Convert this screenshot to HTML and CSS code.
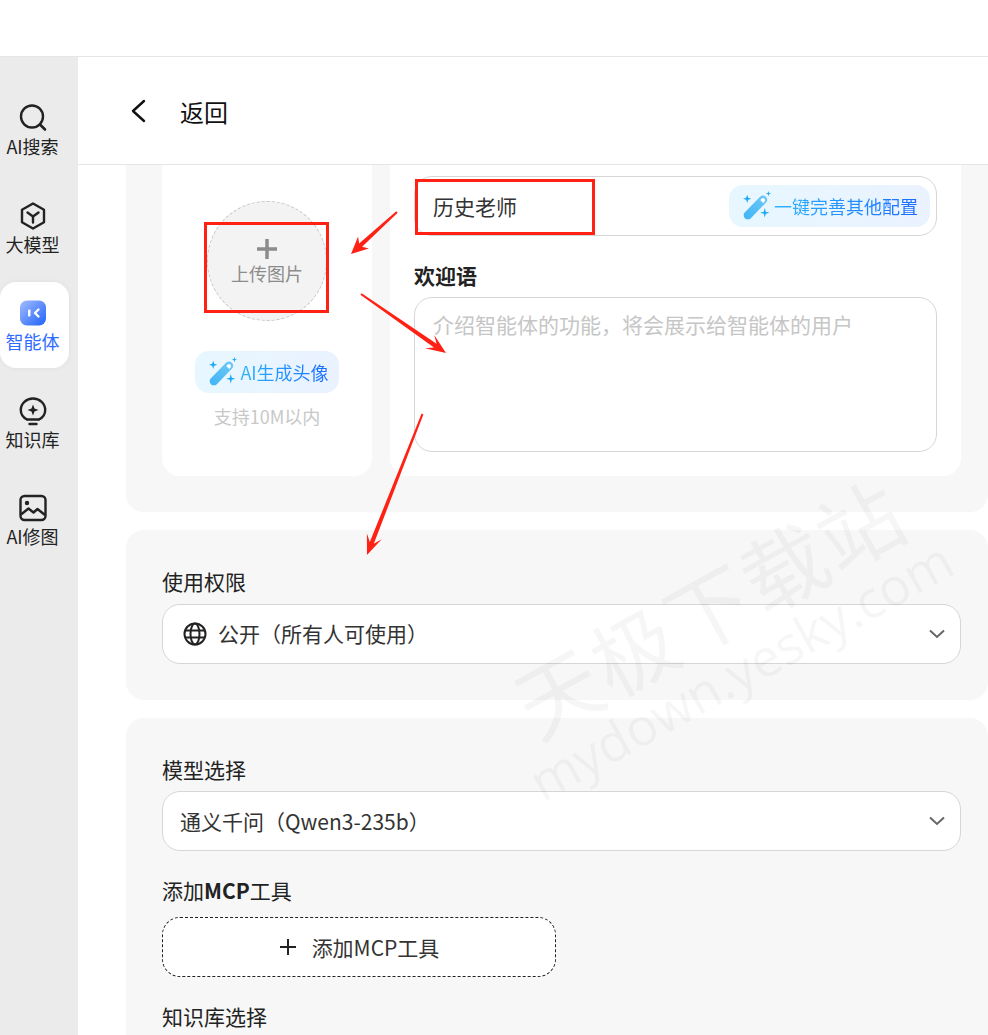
FILE: index.html
```html
<!DOCTYPE html>
<html lang="zh-CN">
<head>
<meta charset="utf-8">
<title>智能体</title>
<link rel="stylesheet" href="styles.css">
</head>
<body>
<div class="app">
  <div class="topbar"></div>
  <div class="body">
    <nav class="sidebar">
      <a class="nav-item">
        <svg class="nav-icon" viewBox="0 0 30 30"><circle cx="14" cy="13.5" r="11" fill="none" stroke="#222" stroke-width="2.4"/><path d="M22 21.5l5 5" stroke="#222" stroke-width="2.6" stroke-linecap="round"/></svg>
        <span>AI搜索</span>
      </a>
      <a class="nav-item">
        <svg class="nav-icon" viewBox="0 0 30 30"><path d="M15 2.5l11 6.2v12.6l-11 6.2-11-6.2V8.700z" fill="none" stroke="#222" stroke-width="2.4" stroke-linejoin="round"/><path d="M9.500 11.500l5.500 4 5.500-4M15 15.500v6" fill="none" stroke="#222" stroke-width="2.4" stroke-linecap="round" stroke-linejoin="round"/></svg>
        <span>大模型</span>
      </a>
      <a class="nav-item active">
        <svg class="nav-icon" viewBox="0 0 30 30"><defs><linearGradient id="ag" x1="0" y1="0" x2="1" y2="1"><stop offset="0" stop-color="#a3bdfd"/><stop offset="1" stop-color="#1f62fb"/></linearGradient></defs><rect x="2" y="2.500" width="26" height="25" rx="7" fill="url(#ag)"/><rect x="10" y="11.500" width="2.500" height="7" rx="1" fill="#fff"/><path d="M20.500 11.500l-3.600 3.500 3.600 3.500" fill="none" stroke="#fff" stroke-width="2.400" stroke-linecap="round" stroke-linejoin="round"/></svg>
        <span>智能体</span>
      </a>
      <a class="nav-item">
        <svg class="nav-icon" viewBox="0 0 30 30"><path d="M9 23.500C5 21.500 2.800 17.800 2.800 14 2.800 7.400 8.300 2.500 15 2.500S27.200 7.400 27.200 14c0 3.800-2.200 7.500-6.200 9.500" fill="none" stroke="#222" stroke-width="2.400" stroke-linecap="round"/><path d="M15 8.500l1.500 4 4 1.500-4 1.500-1.500 4-1.500-4-4-1.500 4-1.500z" fill="#222"/><path d="M9.500 23.500h11M11.500 28h7" stroke="#222" stroke-width="2.400" stroke-linecap="round"/></svg>
        <span>知识库</span>
      </a>
      <a class="nav-item">
        <svg class="nav-icon" viewBox="0 0 30 30"><rect x="2.500" y="3" width="25" height="24" rx="4" fill="none" stroke="#222" stroke-width="2.400"/><circle cx="9" cy="10" r="2.200" fill="#222"/><path d="M3 21.500l7.500-6 5 4 4-3.500 7.500 6" fill="none" stroke="#222" stroke-width="2.400" stroke-linejoin="round"/></svg>
        <span>AI修图</span>
      </a>
    </nav>
    <main class="main">
      <header class="page-head">
        <svg class="back" viewBox="0 0 16 24"><path d="M14 2L3 12l11 10" fill="none" stroke="#111" stroke-width="2.400" stroke-linecap="round" stroke-linejoin="round"/></svg>
        <span class="back-text">返回</span>
      </header>
      <div class="scroll">
        <section class="card card-basic">
          <div class="avatar-panel">
            <div class="upload">
              <svg class="upload-plus" viewBox="0 0 22 22"><path d="M11 1v20M1 11h20" stroke="#8c8c8c" stroke-width="3.500"/></svg>
              <span>上传图片</span>
            </div>
            <div class="magic magic-avatar">
              <svg class="wand" viewBox="0 0 28 28"><use href="#wand-shape"/></svg>
              <span class="magic-text">AI生成头像</span>
            </div>
            <div class="hint">支持10M以内</div>
          </div>
          <div class="info-panel">
            <div class="field field-name">
              <span>历史老师</span>
              <div class="magic">
                <svg class="wand" viewBox="0 0 28 28"><use href="#wand-shape"/></svg>
                <span class="magic-text">一键完善其他配置</span>
              </div>
            </div>
            <div class="label label-bold">欢迎语</div>
            <div class="textarea">介绍智能体的功能，将会展示给智能体的用户</div>
          </div>
        </section>

        <section class="card card-perm">
          <div class="label">使用权限</div>
          <div class="field select select-icon">
            <span class="select-value">
              <svg class="globe" viewBox="0 0 24 24"><g fill="none" stroke="#222" stroke-width="2"><circle cx="12" cy="12" r="10.500"/><ellipse cx="12" cy="12" rx="4.500" ry="10.500"/><path d="M2 8.500h20M2 15.500h20"/></g></svg>
              <span class="select-text">公开（所有人可使用）</span>
            </span>
            <svg class="chevron" viewBox="0 0 16 10"><path d="M1 1.500l7 6.500 7-6.500" fill="none" stroke="#666" stroke-width="2"/></svg>
          </div>
        </section>

        <section class="card card-model">
          <div class="label">模型选择</div>
          <div class="field select">
            <span>通义千问（Qwen3-235b）</span>
            <svg class="chevron" viewBox="0 0 16 10"><path d="M1 1.500l7 6.500 7-6.500" fill="none" stroke="#666" stroke-width="2"/></svg>
          </div>
          <div class="label label-next">添加<b>MCP</b>工具</div>
          <div class="add-tool">
            <svg class="add-plus" viewBox="0 0 18 18"><path d="M9 1v16M1 9h16" stroke="#222" stroke-width="2"/></svg>
            <span>添加MCP工具</span>
          </div>
          <div class="label label-next">知识库选择</div>
        </section>
      </div>
    </main>
  </div>

  <div class="watermark">
    <div class="wm-cn">天极下载站</div>
    <div class="wm-en">mydown.yesky.com</div>
  </div>

  <svg class="annotations" viewBox="0 0 988 1035">
    <rect x="205.500" y="223.500" width="122" height="88" fill="none" stroke="#ff2114" stroke-width="3"/>
    <rect x="416.500" y="180.500" width="177" height="53" fill="none" stroke="#ff2114" stroke-width="3"/>
    <polygon fill="#ff2114" points="397.700,212.700 362.100,246.800 368.900,248.400 351,254 358.100,236.600 359.100,243.600 396.300,211.300"/>
    <polygon fill="#ff2114" points="360.400,294.800 434,347.400 425,348.200 446,353 434.200,335 436.600,343.800 361.600,293.200"/>
    <polygon fill="#ff2114" points="423.400,414.400 373.800,543.700 381.700,539.300 367,555 366.900,533.500 369.800,542.100 421.600,413.600"/>
  </svg>

  <svg class="defs" width="0" height="0">
    <defs>
      <linearGradient id="wg" x1="0" y1="1" x2="1" y2="0"><stop offset="0" stop-color="#3fb4f6"/><stop offset="1" stop-color="#6ec9f7"/></linearGradient>
      <g id="wand-shape">
        <path d="M2.800 20.500L17.500 5.500a4 4 0 0 1 5.700 5.600L8.500 26.200a4 4 0 0 1-5.700-5.700z" fill="url(#wg)"/>
        <path d="M19 7.300a2 2 0 0 1 2.800 2.800l-1.400 1.400-2.800-2.800z" fill="#fff"/>
        <path d="M5 3.500l1 3 3 1-3 1-1 3-1-3-3-1 3-1zM22 16.500l1 3.500 3.500 1-3.500 1-1 3.500-1-3.500-3.500-1 3.500-1zM25.500 0l.6 1.900 1.900.6-1.900.6-.6 1.900-.6-1.900-1.900-.6 1.900-.6z" fill="#1eaaf5"/>
      </g>
    </defs>
  </svg>
</div>
</body>
</html>
```

FILE: styles.css
```css
* { box-sizing: border-box; }
html, body { margin: 0; height: 100%; }
body {
  background: #fff;
  color: #222;
  font-family: "Noto Sans CJK SC", "Noto Sans", sans-serif;
  overflow: hidden;
}
.app { position: relative; width: 988px; height: 1035px; overflow: hidden; display: flex; flex-direction: column; }
.topbar { height: 57px; flex: none; border-bottom: 1px solid #e5e5e5; background: #fff; }
.body { flex: 1; display: flex; min-height: 0; }

.sidebar { width: 78px; flex: none; background: #ebebeb; padding: 30px 9px 0 0; display: flex; flex-direction: column; gap: 11.500px; }
.nav-item { height: 86px; display: flex; flex-direction: column; align-items: center; justify-content: center; border-radius: 16px; font-size: 18px; line-height: 26px; color: #222; padding: 2px 4px 0 0; }
.nav-item.active { background: #fff; color: #2f6bff; box-shadow: 0 0 6px rgba(0, 0, 0, .05); }
.nav-icon { width: 30px; height: 30px; display: block; }

.main { flex: 1; min-width: 0; display: flex; flex-direction: column; }
.page-head { height: 108px; flex: none; display: flex; align-items: center; padding: 2px 0 0 52px; border-bottom: 1px solid #e5e5e5; }
.back { width: 16px; height: 24px; margin-bottom: 2px; }
.back-text { margin-left: 34px; font-size: 24px; line-height: 32px; color: #111; }

.scroll { flex: 1; min-height: 0; overflow: hidden; padding-left: 48px; display: flex; flex-direction: column; gap: 18px; }
.card { background: #f7f7f7; border-radius: 18px; padding: 36px 27px 36px 36px; }
.card-basic { display: flex; gap: 18px; padding-top: 0; border-radius: 0 0 18px 18px; }
.card-model { flex: 1; padding-bottom: 0; border-radius: 18px 18px 0 0; }

.avatar-panel { width: 210px; flex: none; background: #fff; border-radius: 0 0 18px 18px; padding-top: 36px; display: flex; flex-direction: column; align-items: center; }
.upload { width: 120px; height: 120px; border-radius: 50%; background: #f3f3f3; border: 1px dashed #c8c8c8; display: flex; flex-direction: column; align-items: center; justify-content: center; color: #8c8c8c; font-size: 18px; line-height: 26px; padding-top: 2px; }
.upload-plus { width: 22px; height: 22px; }
.hint { margin-top: 10px; font-size: 18px; line-height: 26px; color: #c8c8c8; }

.magic { display: inline-flex; align-items: center; height: 42px; padding: 0 12px 0 13px; gap: 3px; border-radius: 14px; background: linear-gradient(90deg, #e7f7ff, #eaf2ff); font-size: 18px; }
.magic-avatar { margin-top: 30px; padding-right: 10px; }
.wand { width: 29px; height: 29px; flex: none; margin-bottom: 2px; }
.magic-text { background: linear-gradient(90deg, #2cb4ff, #1a6cff); -webkit-background-clip: text; background-clip: text; color: transparent; line-height: 26px; }

.info-panel { flex: 1; min-width: 0; background: #fff; border-radius: 0 0 18px 18px; padding: 11px 24px 24px; }
.field { height: 60px; border: 1px solid #d6d6d6; border-radius: 18px; background: #fff; display: flex; align-items: center; justify-content: space-between; font-size: 21px; color: #333; }
.field-name { padding: 0 6px 0 18px; }
.label { font-size: 21px; line-height: 30px; color: #222; margin-bottom: 7px; }
.label b { font-weight: 600; }
.label-bold { font-weight: 700; margin-top: 24px; }
.label-next { margin-top: 24px; margin-bottom: 12px; }
.textarea { height: 155px; border: 1px solid #d6d6d6; border-radius: 18px; padding: 11px 18px; font-size: 21px; line-height: 30px; color: #c6c6c6; background: #fff; }

.card-perm .label { margin-bottom: 8px; }
.select { padding: 0 15px 0 17px; }
.select-icon { padding-left: 20px; }
.select-value { display: flex; align-items: center; gap: 11px; }
.select-text { padding-bottom: 3px; }
.globe { width: 24px; height: 24px; }
.chevron { width: 16px; height: 10px; flex: none; }

.add-tool { width: 394px; height: 60px; background: #fff; border: 1px dashed #222; border-radius: 18px; display: flex; align-items: center; justify-content: center; gap: 15px; font-size: 21px; color: #333; }
.add-plus { width: 18px; height: 18px; }

.watermark { position: absolute; left: 0; top: 0; width: 988px; height: 1035px; pointer-events: none; color: rgba(0, 0, 0, .035); }
.wm-cn, .wm-en { position: absolute; white-space: nowrap; transform-origin: left center; transform: rotate(-29deg); }
.wm-cn { left: 520px; top: 660px; font-size: 84px; line-height: 100px; letter-spacing: 2px; }
.wm-en { left: 533px; top: 755px; font-size: 52px; line-height: 60px; font-family: "Open Sans", sans-serif; }

.annotations { position: absolute; left: 0; top: 0; width: 988px; height: 1035px; pointer-events: none; }
.defs { position: absolute; }
```
